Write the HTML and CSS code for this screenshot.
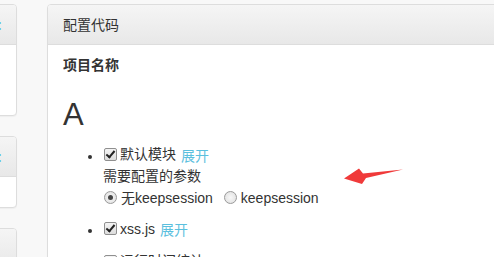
FILE: index.html
```html
<!DOCTYPE html>
<html>
<head>
<meta charset="utf-8">
<link rel="stylesheet" href="styles.css">
</head>
<body>
<div class="page">
  <div class="side">
    <div class="panel side-panel tall">
      <div class="panel-heading"><span class="side-title">菜单</span><a class="side-link">:</a></div>
      <div class="panel-body"></div>
    </div>
    <div class="panel side-panel short">
      <div class="panel-heading"><span class="side-title">项目</span><a class="side-link">:</a></div>
      <div class="panel-body"></div>
    </div>
    <div class="panel side-panel">
      <div class="panel-heading"><span class="side-title">其他</span></div>
    </div>
  </div>
  <div class="panel main-panel">
    <div class="panel-heading">配置代码</div>
    <div class="panel-body main-body">
      <div class="field-label">项目名称</div>
      <h2 class="project-name">A</h2>
      <ul class="modules">
        <li class="module">
          <label class="check"><input type="checkbox" class="cb" checked>默认模块</label> <a class="toggle">展开</a>
          <div class="params-title">需要配置的参数</div>
          <div class="radios">
            <label class="radio"><input type="radio" class="rb" name="ks" checked>无keepsession</label>
            <label class="radio"><input type="radio" class="rb" name="ks">keepsession</label>
          </div>
        </li>
        <li class="module">
          <label class="check"><input type="checkbox" class="cb" checked>xss.js</label> <a class="toggle">展开</a>
        </li>
        <li class="module">
          <label class="check"><input type="checkbox" class="cb">运行时间统计</label> <a class="toggle">展开</a>
        </li>
      </ul>
    </div>
  </div>
</div>
<svg class="arrow" width="494" height="257" viewBox="0 0 494 257">
  <polygon points="344,178.5 359,168.5 363,173.5 403,169.5 366,178 362,184" fill="#f03a3a"/>
</svg>
</body>
</html>
```
FILE: styles.css
```css
html, body {
  margin: 0;
  padding: 0;
}
body {
  background: #f8f8f8;
  font-family: "Liberation Sans", "Noto Sans CJK SC", sans-serif;
  font-size: 14px;
  line-height: 20px;
  color: #333;
  overflow: hidden;
  width: 494px;
  height: 257px;
  position: relative;
}
.page {
  display: flex;
  align-items: flex-start;
  gap: 30px;
  padding-top: 4px;
}
.side {
  width: 200px;
  margin-left: -183px;
  flex-shrink: 0;
  display: flex;
  flex-direction: column;
  gap: 20px;
}
.panel {
  background: #fff;
  border: 1px solid #ddd;
  border-radius: 4px;
  box-shadow: 0 1px 1px rgba(0,0,0,0.04);
}
.panel-heading {
  height: 40px;
  box-sizing: border-box;
  padding: 10px 15px;
  background: linear-gradient(to bottom, #f5f5f5, #e8e8e8);
  border-bottom: 1px solid #ddd;
  border-radius: 3px 3px 0 0;
  display: flex;
  align-items: center;
}
.side-panel .panel-heading {
  justify-content: space-between;
  padding-right: 14px;
}
.side-link {
  color: #5bc0de;
  font-weight: bold;
}
.tall .panel-body {
  height: 70px;
}
.short .panel-body {
  height: 30px;
}
.main-panel {
  width: 600px;
  flex-shrink: 0;
  height: 400px;
}
.main-body {
  padding: 10px 15px;
}
.field-label {
  font-weight: bold;
  line-height: 20px;
}
.project-name {
  font-size: 31px;
  font-weight: normal;
  line-height: 34px;
  margin: 23px 0 12px;
}
.modules {
  margin: 0;
  padding-left: 40px;
}
.module {
  margin-bottom: 11px;
  line-height: 20px;
}
.check, .radio {
  display: inline-flex;
  align-items: center;
  gap: 3px;
  height: 20px;
}
.radio {
  gap: 4px;
}
.params-title {
  height: 20px;
}
.toggle {
  color: #5bc0de;
  margin-left: 1px;
}
.cb, .rb {
  appearance: none;
  -webkit-appearance: none;
  margin: 0 0 0 1px;
  width: 13px;
  height: 13px;
  box-sizing: border-box;
  border: 1px solid #8f8f8f;
  background: linear-gradient(to bottom, #f4f4f4, #dcdcdc);
  position: relative;
}
.cb {
  border-radius: 2px;
}
.cb:checked::after {
  content: "";
  position: absolute;
  left: 3px;
  top: 0px;
  width: 3px;
  height: 7px;
  border: solid #222;
  border-width: 0 2px 2px 0;
  transform: rotate(40deg);
}
.rb {
  border-radius: 50%;
  border-color: #9a9a9a;
  background: radial-gradient(circle, #f7f7f7, #dedede);
}
.rb:checked::after {
  content: "";
  position: absolute;
  left: 3px;
  top: 3px;
  width: 5px;
  height: 5px;
  border-radius: 50%;
  background: #444;
}
.radios {
  display: flex;
  gap: 10px;
  margin-top: 2px;
}
.arrow {
  position: absolute;
  left: 0;
  top: 0;
  pointer-events: none;
}
```
